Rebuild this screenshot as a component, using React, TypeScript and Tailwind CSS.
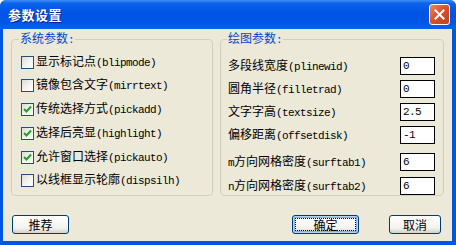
import React from 'react';

const checks = [
  { text: '显示标记点(blipmode)', on: false, gap: 'mt-[8px]' },
  { text: '镜像包含文字(mirrtext)', on: false, gap: 'mt-[9px]' },
  { text: '传统选择方式(pickadd)', on: true, gap: 'mt-[10px]' },
  { text: '选择后亮显(highlight)', on: true, gap: 'mt-[10px]' },
  { text: '允许窗口选择(pickauto)', on: true, gap: 'mt-[10px]' },
  { text: '以线框显示轮廓(dispsilh)', on: false, gap: 'mt-[9px]' },
];

const fields = [
  { text: '多段线宽度(plinewid)', value: '0', gap: 'mt-[10px]' },
  { text: '圆角半径(filletrad)', value: '0', gap: 'mt-[5px]' },
  { text: '文字字高(textsize)', value: '2.5', gap: 'mt-[5px]' },
  { text: '偏移距离(offsetdisk)', value: '-1', gap: 'mt-[5px]' },
  { text: 'm方向网格密度(surftab1)', value: '6', gap: 'mt-[9px]' },
  { text: 'n方向网格密度(surftab2)', value: '6', gap: 'mt-[6px]' },
];

// SimSun-like: CJK 12px, ascii half width (6px)
function Mixed({ text }: { text: string }) {
  const runs = text.match(/[\x00-\x7f]+|[^\x00-\x7f]+/g) || [];
  return (
    <>
      {runs.map((r, i) =>
        /^[\x00-\x7f]/.test(r) ? (
          <span key={i} className="font-['Liberation_Mono',monospace] text-[11px] tracking-[-0.6px]">
            {r}
          </span>
        ) : (
          <span key={i}>{r}</span>
        )
      )}
    </>
  );
}

function CheckBox({ on }: { on: boolean }) {
  return (
    <div className="w-[13px] h-[13px] shrink-0 border border-[#1C5180] bg-[linear-gradient(135deg,#DCDCD7,#F6F6F3_60%,#FFFFFF)] flex items-center justify-center">
      {on && (
        <svg width="11" height="11" viewBox="0 0 11 11">
          <polyline points="2,5 4.5,7.5 9,2.5" fill="none" stroke="#21A121" strokeWidth="2" />
        </svg>
      )}
    </div>
  );
}

function XpButton({ label, w, def }: { label: string; w: string; def?: boolean }) {
  return (
    <button
      className={`${w} h-[19px] border border-[#003C74] rounded-[3px] bg-[linear-gradient(to_bottom,#FFFFFF,#F3F3EF_70%,#D6D0C5)] text-[12px] leading-[14px] text-black flex items-center justify-center ${
        def ? 'shadow-[inset_0_0_0_1px_#B7D0F5,inset_0_0_0_2px_#89ADE4] outline-1 outline-dotted outline-black outline-offset-[-4px]' : ''
      }`}
    >
      {label}
    </button>
  );
}

export default function App() {
  return (
    <div className="w-[456px] h-[245px] bg-[#0055E5] rounded-t-[6px] flex flex-col overflow-hidden font-['Noto_Sans_CJK_SC',sans-serif]">
      {/* Title bar */}
      <div className="h-[29px] shrink-0 flex items-center justify-between pl-[8px] pr-[6px] rounded-t-[6px] bg-[linear-gradient(to_bottom,#3D8DF5_0%,#0A62EB_12%,#0054E3_45%,#0056E8_80%,#0A60EE_100%)]">
        <span className="text-white font-bold text-[13px] tracking-[0.5px] [text-shadow:1px_1px_#0A1E8C]">
          参数设置
        </span>
        <div className="w-[21px] h-[21px] rounded-[3px] border border-white bg-[linear-gradient(135deg,#E8896A,#D9532F_45%,#C1401B)] flex items-center justify-center">
          <svg width="11" height="11" viewBox="0 0 11 11">
            <path d="M1.5 1.5 L9.5 9.5 M9.5 1.5 L1.5 9.5" stroke="white" strokeWidth="2" strokeLinecap="square" />
          </svg>
        </div>
      </div>

      {/* Client area */}
      <div className="flex-1 ml-[3px] mr-[4px] mb-[4px] bg-[#ECE9D8] flex flex-col text-[12px] leading-[14px] text-black">
        <div className="flex gap-[7px] pl-[8px] pr-[8px] mt-[2px]">
          <fieldset className="w-[202px] h-[165px] border border-[#D0D0BF] rounded-[4px] pl-[9px]">
            <legend className="-ml-[2px] px-[1px] text-[#0046D5]">
              <Mixed text="系统参数:" />
            </legend>
            <div className="flex flex-col">
              {checks.map((c) => (
                <div key={c.text} className={`${c.gap} h-[14px] flex items-center gap-[2px]`}>
                  <CheckBox on={c.on} />
                  <span className="whitespace-nowrap">
                    <Mixed text={c.text} />
                  </span>
                </div>
              ))}
            </div>
          </fieldset>

          <fieldset className="w-[224px] h-[165px] border border-[#D0D0BF] rounded-[4px] pl-[7px] pr-[8px]">
            <legend className="-ml-[1px] px-[1px] text-[#0046D5]">
              <Mixed text="绘图参数:" />
            </legend>
            <div className="flex flex-col">
              {fields.map((f) => (
                <div key={f.text} className={`${f.gap} h-[18px] flex items-center justify-between`}>
                  <span className="whitespace-nowrap">
                    <Mixed text={f.text} />
                  </span>
                  <div className="w-[35px] h-[18px] border border-black bg-white pl-[2px] flex items-center">
                    <Mixed text={f.value} />
                  </div>
                </div>
              ))}
            </div>
          </fieldset>
        </div>

        <div className="flex items-center mt-[19px] pl-[9px] pr-[11px]">
          <XpButton label="推荐" w="w-[57px]" />
          <div className="flex-1" />
          <XpButton label="确定" w="w-[67px]" def />
          <div className="w-[30px]" />
          <XpButton label="取消" w="w-[52px]" />
        </div>
      </div>
    </div>
  );
}
